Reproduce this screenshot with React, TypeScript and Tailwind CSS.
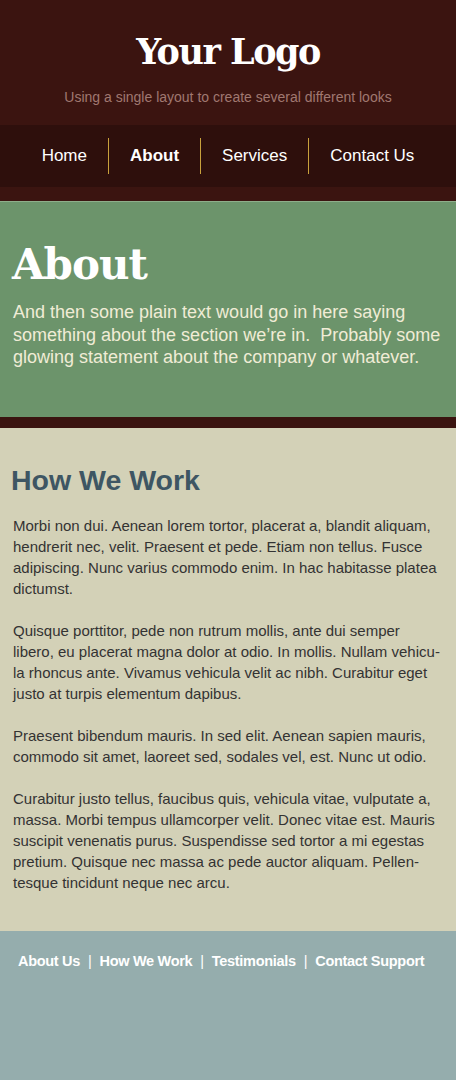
const navItems = ["Home", "About", "Services", "Contact Us"]

const footerLinks = ["About Us", "How We Work", "Testimonials", "Contact Support"]

const paragraphs = [
    "Morbi non dui. Aenean lorem tortor, placerat a, blandit aliquam, hendrerit nec, velit. Praesent et pede. Etiam non tellus. Fusce adipiscing. Nunc varius commodo enim. In hac habitasse platea dictumst.",
    "Quisque porttitor, pede non rutrum mollis, ante dui semper libero, eu placerat magna dolor at odio. In mollis. Nullam vehicu\u00ADla rhoncus ante. Vivamus vehicula velit ac nibh. Curabitur eget justo at turpis elementum dapibus.",
    "Praesent bibendum mauris. In sed elit. Aenean sapien mauris, commodo sit amet, laoreet sed, sodales vel, est. Nunc ut odio.",
    "Curabitur justo tellus, faucibus quis, vehicula vitae, vulputate a, massa. Morbi tempus ullamcorper velit. Donec vitae est. Mauris suscipit venenatis purus. Suspendisse sed tortor a mi egestas pretium. Quisque nec massa ac pede auctor aliquam. Pellen\u00ADtesque tincidunt neque nec arcu."
]

const sans = { fontFamily: "'Liberation Sans', Arial, sans-serif" }
const slab = { fontFamily: "'DejaVu Serif', 'Liberation Serif', serif" }

export default function App() {
    return (
        <div className="w-[456px] min-h-[1080px] flex flex-col bg-[#95adad]" style={sans}>
            {/* Header */}
            <header className="bg-[#3b1410] pb-[14px]">
                <div className="pt-[28px] h-[125px] flex flex-col items-center">
                    <h1 className="text-white text-[35px] font-bold leading-[48px] tracking-[-1.5px]" style={slab}>
                        Your Logo
                    </h1>
                    <p className="text-[#a07870] text-[14px] leading-[18px] mt-[12px]">
                        Using a single layout to create several different looks
                    </p>
                </div>

                {/* Nav */}
                <nav className="bg-[#2e0f0c] h-[62px] flex items-center justify-center">
                    {navItems.map((item, idx) => (
                        <div
                            key={item}
                            className={`h-[36px] flex items-center px-[21px] text-[17px] text-white ${idx > 0 ? "border-l border-[#c9a13c]" : ""} ${item === "About" ? "font-bold" : ""}`}
                        >
                            {item}
                        </div>
                    ))}
                </nav>
            </header>

            {/* About banner */}
            <section className="bg-[#6c946b] border-t border-[#8eae8a] h-[216px] px-[12px] pt-[38px]">
                <h2 className="text-white text-[42px] font-bold leading-[50px] tracking-[-1px]" style={slab}>
                    About
                </h2>
                <p className="text-[#f0ecd6] text-[18px] leading-[22.5px] mt-[11px] pl-[1px]">
                    And then some plain text would go in here saying something about the section we’re in.&nbsp; Probably some glowing statement about the company or whatever.
                </p>
            </section>
            <div className="h-[11px] bg-[#3b1410]" />

            {/* Content */}
            <main className="bg-[#d3d1b7] px-[13px] pt-[34px] pb-[38px]">
                <h3 className="text-[#3e5663] text-[28.5px] font-bold leading-[36px] -ml-[2px]">How We Work</h3>
                <div className="mt-[17px] flex flex-col gap-[21px]">
                    {paragraphs.map((text, idx) => (
                        <p key={idx} className="text-[#333333] text-[15px] leading-[21px]">
                            {text}
                        </p>
                    ))}
                </div>
            </main>

            {/* Footer */}
            <footer className="bg-[#95adad] pt-[20px] pl-[18px] flex-grow">
                <div className="flex items-center gap-[8px] text-white text-[14.5px] font-bold tracking-[-0.3px] leading-[20px]">
                    {footerLinks.map((link, idx) => (
                        <div key={link} className="flex items-center gap-[8px]">
                            {idx > 0 && <span className="font-normal">|</span>}
                            <span>{link}</span>
                        </div>
                    ))}
                </div>
            </footer>
        </div>
    )
}
